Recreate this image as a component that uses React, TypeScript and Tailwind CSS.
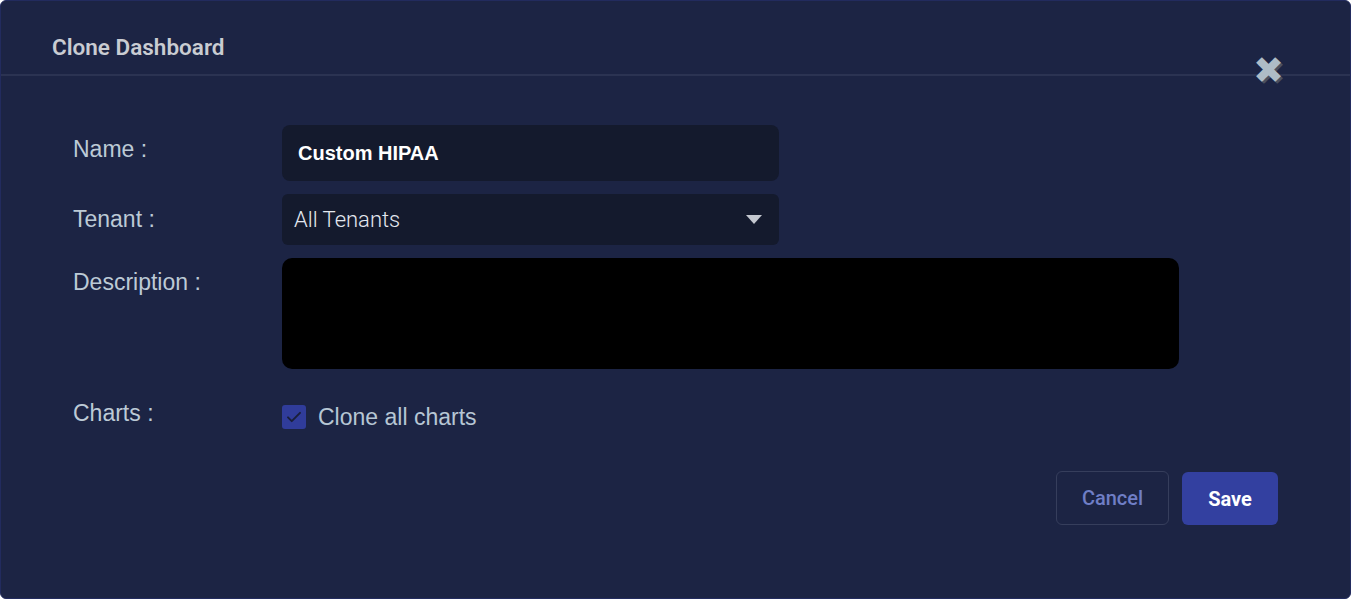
import React, { useState } from 'react';

const CloneDashboardModal: React.FC = () => {
  const [name, setName] = useState('Custom HIPAA');
  const [description, setDescription] = useState('');
  const [cloneCharts, setCloneCharts] = useState(true);

  return (
    <div className="relative h-[599px] w-full overflow-hidden rounded-md border border-[#222b5e] bg-[#1c2444] font-['Liberation_Sans',Arial,sans-serif]">
      <header className="flex h-[75px] items-start border-b-2 border-[#2b3352] pl-[51px] pt-[33px]">
        <h3 className="font-['Roboto',sans-serif] text-[22.5px] font-semibold leading-[26px] text-[#c9ccd2]">Clone Dashboard</h3>
      </header>

      {/* close button sits over the header line */}
      <button className="absolute right-[66px] top-[51px] text-[37px] leading-none text-[#aebcc6] [text-shadow:2px_2px_0_#4a5060]">
        ✖
      </button>

      <main className="flex flex-col pl-[72px] pt-[49px]">
        <div className="flex">
          <label className="w-[209px] pt-[11px] text-[23px] leading-[26px] text-[#bccad6]">Name :</label>
          <input
            value={name}
            onChange={(e) => setName(e.target.value)}
            className="h-[56px] w-[497px] rounded-lg bg-[#141a2d] px-4 text-[20px] font-bold text-white outline-none"
          />
        </div>

        <div className="mt-[13px] flex">
          <label className="w-[209px] pt-[12px] text-[23px] leading-[26px] text-[#bccad6]">Tenant :</label>
          <div className="flex h-[51px] w-[497px] items-center justify-between rounded-md bg-[#141a2d] pl-3 pr-[17px]">
            <span className="font-['Roboto',sans-serif] text-[22px] font-light text-[#e4e8f0]">All Tenants</span>
            <svg width="16" height="9" viewBox="0 0 16 9"><path d="M0 0h16L8 9z" fill="#c4c8d0" /></svg>
          </div>
        </div>

        <div className="mt-[13px] flex">
          <label className="w-[209px] pt-[11px] text-[23px] leading-[26px] text-[#bccad6]">Description :</label>
          <textarea
            value={description}
            onChange={(e) => setDescription(e.target.value)}
            className="h-[111px] w-[897px] resize-none rounded-[10px] bg-black p-3 text-[18px] text-white outline-none"
          />
        </div>

        <div className="mt-[31px] flex">
          <label className="w-[209px] text-[23px] leading-[26px] text-[#bccad6]">Charts :</label>
          <label className="mt-[4px] flex items-center gap-3" onClick={() => setCloneCharts(!cloneCharts)}>
            <span className="flex h-[24px] w-[24px] items-center justify-center rounded-[3px] bg-[#303c9a]">
              {cloneCharts && (
                <svg width="18" height="18" viewBox="0 0 24 24" fill="none" stroke="#1a1f3a" strokeWidth="2.6" strokeLinecap="round" strokeLinejoin="round">
                  <path d="M4 12.5l5 5L20 6.5" />
                </svg>
              )}
            </span>
            <span className="text-[23px] leading-[26px] text-[#b6c6d4]">Clone all charts</span>
          </label>
        </div>
      </main>

      <footer className="mt-[41px] flex justify-end gap-[13px] pr-[72px]">
        <button className="h-[54px] w-[113px] rounded-md border border-[#363e5c] font-['Roboto',sans-serif] text-[20px] font-medium text-[#6f7ec6]">
          Cancel
        </button>
        <button className="mt-px h-[53px] w-[96px] rounded-md bg-[#3340a0] font-['Roboto',sans-serif] text-[20px] font-bold text-white">
          Save
        </button>
      </footer>
    </div>
  );
};

export default function App() {
  return <CloneDashboardModal />;
}
